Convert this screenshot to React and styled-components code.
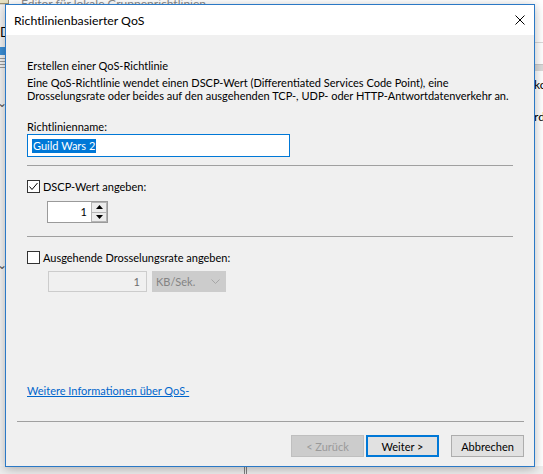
import React from 'react';
import styled, { createGlobalStyle } from 'styled-components';

const GlobalStyle = createGlobalStyle`
  html, body {
    margin: 0;
    padding: 0;
  }
  body {
    font-family: Lato, "Noto Sans", sans-serif;
    font-size: 11px;
    color: #000;
    background: #fff;
  }
  #root {
    width: 543px;
    height: 474px;
  }
`;

export default function App() {
  return (
    <>
      <GlobalStyle />
      <Desktop>
        <AppWindow>
          <AppCaption>
            <CaptionIcon />
            <CaptionText>Editor für lokale Gruppenrichtlinien</CaptionText>
          </AppCaption>
          <AppMain>
            <TreePane>
              <TreeLetter>D</TreeLetter>
              <TreeIcon $color="#3c8fd6" />
              <TreeIcon $color="#9a9a9a" $lines />
              <TreeChevron $top={24}>⌄</TreeChevron>
              <TreeChevron $top={186}>⌄</TreeChevron>
            </TreePane>
            <ListPane>
              <ListHeader />
              <ListBand />
              <ListItem $top={6}>ko</ListItem>
              <ListItem $top={17}>rd</ListItem>
            </ListPane>
          </AppMain>
          <StatusStrip>
            <Splitter />
          </StatusStrip>
        </AppWindow>

        <Dialog>
          <TitleBar>
            <TitleText>Richtlinienbasierter QoS</TitleText>
            <CloseIcon viewBox="0 0 10 10">
              <path d="M0.5 0.5 L9.5 9.5 M9.5 0.5 L0.5 9.5" stroke="#000" strokeWidth="1" />
            </CloseIcon>
          </TitleBar>

          <DialogBody>
            <Content>
              <Heading>Erstellen einer QoS-Richtlinie</Heading>
              <Description>
                Eine QoS-Richtlinie wendet einen DSCP-Wert (Differentiated Services Code Point), eine
                <br />
                Drosselungsrate oder beides auf den ausgehenden TCP-, UDP- oder HTTP-Antwortdatenverkehr an.
              </Description>

              <FieldLabel>Richtlinienname:</FieldLabel>
              <NameInput>
                <Selection>Guild Wars 2</Selection>
              </NameInput>

              <Separator />

              <CheckRow>
                <CheckBox>
                  <svg width="11" height="11" viewBox="0 0 11 11">
                    <polyline points="1.5,5.5 4,8.5 9.5,2" fill="none" stroke="#000" strokeWidth="1" />
                  </svg>
                </CheckBox>
                DSCP-Wert angeben:
              </CheckRow>

              <Spinner>
                <SpinValue>1</SpinValue>
                <SpinButtons>
                  <SpinButton>
                    <svg width="7" height="4" viewBox="0 0 7 4"><polygon points="3.5,0 7,4 0,4" fill="#000" /></svg>
                  </SpinButton>
                  <SpinButton>
                    <svg width="7" height="4" viewBox="0 0 7 4"><polygon points="0,0 7,0 3.5,4" fill="#000" /></svg>
                  </SpinButton>
                </SpinButtons>
              </Spinner>

              <Separator $gap={13} />

              <CheckRow>
                <CheckBox />
                Ausgehende Drosselungsrate angeben:
              </CheckRow>

              <RateRow>
                <RateInput>1</RateInput>
                <UnitCombo>
                  KB/Sek.
                  <svg width="9" height="5" viewBox="0 0 9 5">
                    <polyline points="0.5,0.5 4.5,4.5 8.5,0.5" fill="none" stroke="#a6a6a6" strokeWidth="1" />
                  </svg>
                </UnitCombo>
              </RateRow>

              <InfoLink href="#">Weitere Informationen über QoS-</InfoLink>
            </Content>

            <Footer>
              <FooterRule />
              <ButtonRow>
                <WizardButton $variant="disabled">&lt; Zurück</WizardButton>
                <WizardButton $variant="default">Weiter &gt;</WizardButton>
                <WizardButton $gap={12}>Abbrechen</WizardButton>
              </ButtonRow>
            </Footer>
          </DialogBody>
        </Dialog>
      </Desktop>
    </>
  );
}

const Desktop = styled.div`
  position: relative;
  width: 543px;
  height: 474px;
  overflow: hidden;
  background: #fff;
`;

/* background window (Gruppenrichtlinien-Editor) */

const AppWindow = styled.div`
  display: flex;
  flex-direction: column;
  width: 100%;
  height: 100%;
`;

const AppCaption = styled.div`
  display: flex;
  align-items: flex-end;
  gap: 12px;
  height: 4px;
  overflow: hidden;
  background: #fff;
`;

const CaptionIcon = styled.div`
  width: 9px;
  height: 12px;
  margin-left: -2px;
  flex-shrink: 0;
  background: #e9e3c4;
  border: 1px solid #9c9170;
`;

const CaptionText = styled.span`
  color: #8a8a8a;
  font-size: 12px;
  line-height: 12px;
  margin-bottom: -6px;
  white-space: nowrap;
`;

const AppMain = styled.div`
  flex: 1;
  display: flex;
`;

const TreePane = styled.div`
  position: relative;
  width: 5px;
  flex-shrink: 0;
  overflow: hidden;
  background: #f3f3f3;
  border-top: 1px solid #d8d8d8;
  display: flex;
  flex-direction: column;
`;

const TreeLetter = styled.span`
  margin-top: 20px;
  margin-left: 0;
  font-size: 13px;
  line-height: 14px;
  color: #000;
`;

const TreeIcon = styled.div`
  width: 10px;
  height: ${(p) => (p.$lines ? 11 : 8)}px;
  margin: ${(p) => (p.$lines ? '3px 0 0 -4px' : '8px 0 0 -3px')};
  background: ${(p) =>
    p.$lines
      ? `repeating-linear-gradient(#9a9a9a 0 1px, transparent 1px 3px)`
      : p.$color};
  border-radius: ${(p) => (p.$lines ? 0 : '3px')};
`;

const TreeChevron = styled.span`
  position: absolute;
  left: -3px;
  top: ${(p) => p.$top + 70}px;
  font-size: 12px;
  line-height: 8px;
  color: #555;
`;

const ListPane = styled.div`
  flex: 1;
  display: flex;
  flex-direction: column;
  padding-left: 529px;
  background: #fff;
`;

const ListHeader = styled.div`
  margin-top: 38px;
  height: 1px;
  background: #d9d9d9;
`;

const ListBand = styled.div`
  margin-top: 21px;
  height: 6px;
  background: #dadada;
  border-top: 1px solid #c8c8c8;
`;

const ListItem = styled.span`
  margin-top: ${(p) => p.$top}px;
  font-size: 12px;
  line-height: 15px;
  white-space: nowrap;
`;

const StatusStrip = styled.div`
  height: 8px;
  background: #eeeeee;
  display: flex;
  padding-left: 244px;
`;

const Splitter = styled.div`
  width: 1px;
  height: 100%;
  border-left: 1px solid #808080;
  border-right: 1px solid #808080;
`;

/* dialog */

const Dialog = styled.div`
  position: absolute;
  left: 5px;
  top: 4px;
  width: 530px;
  height: 463px;
  box-sizing: border-box;
  border: 1px solid #2b79c6;
  background: #f0f0f0;
  box-shadow: 0 2px 10px rgba(0, 0, 0, 0.28);
  display: flex;
  flex-direction: column;
`;

const TitleBar = styled.div`
  height: 30px;
  flex-shrink: 0;
  background: #fff;
  display: flex;
  align-items: center;
  justify-content: space-between;
  padding: 0 9px 0 8px;
`;

const TitleText = styled.span`
  font-size: 12.3px;
  line-height: 15px;
`;

const CloseIcon = styled.svg`
  width: 10px;
  height: 10px;
`;

const DialogBody = styled.div`
  flex: 1;
  display: flex;
  flex-direction: column;
`;

const Content = styled.div`
  flex: 1;
  display: flex;
  flex-direction: column;
  align-items: flex-start;
  padding: 23px 21px 0 21px;
`;

const Heading = styled.div`
  line-height: 15px;
  white-space: nowrap;
`;

const Description = styled.p`
  margin: 3px 0 0;
  line-height: 13px;
  white-space: nowrap;
`;

const FieldLabel = styled.div`
  margin-top: 17px;
  line-height: 15px;
`;

const NameInput = styled.div`
  width: 263px;
  height: 23px;
  box-sizing: border-box;
  border: 1px solid #0078d7;
  background: #fff;
  display: flex;
  align-items: center;
  padding-left: 4px;
`;

const Selection = styled.span`
  background: #0078d7;
  color: #fff;
  line-height: 14px;
  padding: 0 1px;
`;

const Separator = styled.div`
  align-self: stretch;
  height: 1px;
  margin-top: ${(p) => p.$gap ?? 8}px;
  background: #a0a0a0;
`;

const CheckRow = styled.label`
  display: flex;
  align-items: center;
  gap: 3px;
  margin-top: 13px;
  line-height: 15px;
  white-space: nowrap;
`;

const CheckBox = styled.span`
  width: 13px;
  height: 13px;
  box-sizing: border-box;
  border: 1px solid #333;
  background: #fff;
  display: flex;
  align-items: center;
  justify-content: center;
`;

const Spinner = styled.div`
  margin: 7px 0 0 20px;
  width: 61px;
  height: 22px;
  box-sizing: border-box;
  border: 1px solid #9a9a9a;
  background: #fff;
  display: flex;
  align-items: stretch;
`;

const SpinValue = styled.span`
  flex: 1;
  text-align: right;
  padding-right: 4px;
  line-height: 20px;
`;

const SpinButtons = styled.div`
  width: 16px;
  display: flex;
  flex-direction: column;
`;

const SpinButton = styled.div`
  flex: 1;
  box-sizing: border-box;
  border: 1px solid #b4b4b4;
  background: #ececec;
  display: flex;
  align-items: center;
  justify-content: center;
  & + & {
    border-top: none;
  }
`;

const RateRow = styled.div`
  display: flex;
  gap: 5px;
  margin: 6px 0 0 21px;
`;

const RateInput = styled.div`
  width: 99px;
  height: 21px;
  box-sizing: border-box;
  border: 1px solid #cccccc;
  background: #f0f0f0;
  color: #6d6d6d;
  text-align: right;
  padding-right: 6px;
  line-height: 19px;
`;

const UnitCombo = styled.div`
  width: 74px;
  height: 21px;
  box-sizing: border-box;
  border: 1px solid #cccccc;
  background: #cccccc;
  color: #838383;
  display: flex;
  align-items: center;
  justify-content: space-between;
  padding: 0 5px 0 3px;
`;

const InfoLink = styled.a`
  margin-top: auto;
  margin-bottom: 23px;
  color: #0066cc;
  text-decoration: underline;
  line-height: 15px;
`;

const Footer = styled.div`
  padding: 0 10px 9px 11px;
`;

const FooterRule = styled.div`
  height: 1px;
  background: #a0a0a0;
`;

const ButtonRow = styled.div`
  display: flex;
  justify-content: flex-end;
  margin-top: 13px;
`;

const WizardButton = styled.button`
  width: 73px;
  height: 22px;
  margin-left: ${(p) => p.$gap ?? 2}px;
  box-sizing: border-box;
  font-family: inherit;
  font-size: 11px;
  padding: 0;
  background: ${(p) => (p.$variant === 'disabled' ? '#cccccc' : '#e1e1e1')};
  color: ${(p) => (p.$variant === 'disabled' ? '#9a9a9a' : '#000')};
  border: ${(p) =>
    p.$variant === 'default'
      ? '2px solid #0078d7'
      : p.$variant === 'disabled'
      ? '1px solid #bfbfbf'
      : '1px solid #adadad'};
`;
